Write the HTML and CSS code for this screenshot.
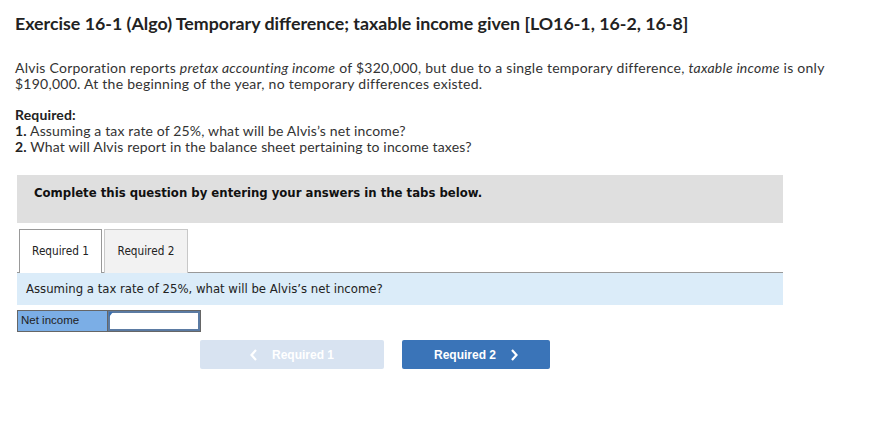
FILE: index.html
```html
<!DOCTYPE html>
<html>
<head>
<meta charset="utf-8">
<link rel="stylesheet" href="styles.css">
</head>
<body>
<div class="page">
  <h1 class="title">Exercise 16-1 (Algo) Temporary difference; taxable income given [LO16-1, 16-2, 16-8]</h1>
  <p class="intro">Alvis Corporation reports <em>pretax accounting income</em> of $320,000, but due to a single temporary difference, <em>taxable income</em> is only $190,000. At the beginning of the year, no temporary differences existed.</p>
  <div class="req">
    <div><b>Required:</b></div>
    <div><b>1.</b> Assuming a tax rate of 25%, what will be Alvis’s net income?</div>
    <div><b>2.</b> What will Alvis report in the balance sheet pertaining to income taxes?</div>
  </div>
  <div class="widget">
    <div class="notice">Complete this question by entering your answers in the tabs below.</div>
    <div class="tabs">
      <div class="tab active">Required 1</div>
      <div class="tab">Required 2</div>
    </div>
    <div class="prompt">Assuming a tax rate of 25%, what will be Alvis’s net income?</div>
    <div class="row">
      <div class="label">Net income</div>
      <div class="input"><span class="flag"></span></div>
    </div>
    <div class="nav">
      <div class="btn disabled"><svg class="chev left" width="8" height="12" viewBox="0 0 8 12"><polyline points="6,1 1.5,6 6,11" fill="none" stroke="#fff" stroke-width="2.2"/></svg>Required 1</div>
      <div class="btn primary">Required 2<svg class="chev right" width="8" height="12" viewBox="0 0 8 12"><polyline points="2,1 6.5,6 2,11" fill="none" stroke="#fff" stroke-width="2.2"/></svg></div>
    </div>
  </div>
</div>
</body>
</html>
```
FILE: styles.css
```css
* { box-sizing: border-box; }
html, body { margin: 0; padding: 0; background: #fff; }
.page {
  padding: 12px 15px 0 15px;
  color: #333;
  font-family: "Lato", "Open Sans", sans-serif;
}
.title {
  margin: 0;
  font-size: 17.8px;
  line-height: 22px;
  font-weight: 700;
  color: #222;
}
.intro {
  margin: 26px 0 0 0;
  font-size: 14px;
  letter-spacing: 0.25px;
  line-height: 16px;
}
.intro em { font-style: italic; }
.req {
  margin-top: 15px;
  font-size: 14px;
  letter-spacing: 0.15px;
  line-height: 16px;
}
.req b { color: #222; }
.widget {
  margin-top: 20px;
  margin-left: 2px;
  width: 766px;
  font-family: "DejaVu Sans Condensed", "DejaVu Sans", Verdana, sans-serif;
}
.notice {
  height: 48px;
  background: #dfdfdf;
  padding: 10px 0 0 17px;
  font-weight: 700;
  font-size: 13px;
  line-height: 16px;
  color: #111;
}
.tabs {
  display: flex;
  gap: 2px;
  margin-top: 6px;
  padding-left: 2px;
  border-bottom: 1px solid #999;
  height: 44px;
}
.tab {
  width: 84px;
  height: 44px;
  border: 1px solid #c8c8c8;
  border-bottom: none;
  background: #f2f2f2;
  font-size: 11.7px;
  color: #222;
  display: flex;
  align-items: center;
  justify-content: center;
  padding-bottom: 2px;
}
.tab.active {
  width: 83px;
  height: 44px;
  background: #fff;
  border-color: #999;
  margin-bottom: -1px;
}
.prompt {
  height: 32px;
  background: #dbecf9;
  padding: 8px 0 0 9px;
  font-size: 13px;
  line-height: 16px;
  color: #222;
}
.row {
  display: flex;
  margin-top: 5px;
  width: 184px;
  height: 22px;
  border: 1px solid #666;
  font-family: "Liberation Sans", Arial, sans-serif;
}
.label {
  width: 90px;
  background: #7baee6;
  border-right: 1px solid #666;
  font-size: 11.5px;
  line-height: 19px;
  padding-left: 3px;
  color: #222;
}
.input {
  flex: 1;
  background: #fff;
  border: 2px solid #5b7ba3;
  position: relative;
}
.flag {
  position: absolute;
  left: -1px;
  top: -1px;
  width: 0;
  height: 0;
  border-top: 5px solid #3a6fb0;
  border-right: 4px solid transparent;
}
.nav {
  display: flex;
  gap: 18px;
  margin-top: 8px;
  margin-left: 183px;
  font-family: "Liberation Sans", Arial, sans-serif;
}
.btn {
  height: 29px;
  border-radius: 2px;
  display: flex;
  align-items: center;
  justify-content: center;
  font-weight: 700;
  font-size: 12px;
  color: #fff;
}
.btn.disabled {
  width: 184px;
  background: #d8e3f1;
}
.btn.primary {
  width: 148px;
  background: #3a74b8;
}
.chev.left { margin-right: 14px; }
.chev.right { margin-left: 14px; }
```
